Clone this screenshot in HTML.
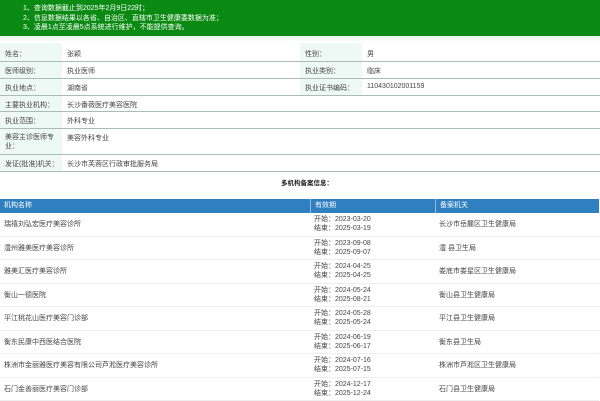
<!DOCTYPE html>
<html><head><meta charset="utf-8"><style>
*{margin:0;padding:0;box-sizing:border-box}
body{width:600px;height:400px;overflow:hidden;background:#fff;font-family:"Liberation Sans","Noto Sans CJK SC",sans-serif;font-size:7px;color:#444}
.hd{position:absolute;left:0;top:0;width:600px;height:36px;background:#0a8a12;color:#fff;font-size:7px;line-height:9.7px;padding:4px 0 0 23px}
.hd::after{content:"";position:absolute;left:0;top:36px;width:600px;height:6px;background:linear-gradient(#e8f4ea,#fff)}
.row{position:absolute;left:0;width:600px;border-bottom:1px solid #a9bdb5}
.c{position:absolute;top:0;bottom:0;padding:6px 0 0 5px}
.lab{background:#eef9f5}
.t{position:absolute;left:0;width:600px;top:177px;text-align:center;font-weight:bold;color:#222;font-size:6.5px;padding-left:14px}
.bh{position:absolute;left:0;top:199px;width:599px;height:14px;background:#2f7fc1;color:#fff}
.bh div,.br div{position:absolute;top:0;bottom:0;padding-left:4px}
.bh div{line-height:14px;border-left:1px solid #8fbbe0}
.br{position:absolute;left:0;width:599px;height:23.5px;border-bottom:1px solid #eee}
.br div{display:flex;align-items:center}
</style></head><body>
<div class="hd">1、查询数据截止到2025年2月9日22时；<br>2、信息数据结果以各省、自治区、直辖市卫生健康委数据为准；<br>3、凌晨1点至凌晨5点系统进行维护，不能提供查询。</div>

<div class="row" style="top:43px;height:19px"><div class="c lab" style="left:0;width:62px">姓名：</div><div class="c" style="left:62px">张颖</div><div class="c lab" style="left:300px;width:62px">性别：</div><div class="c" style="left:362px">男</div></div>
<div class="row" style="top:62px;height:17px"><div class="c lab" style="left:0;width:62px;padding-top:4px">医师级别：</div><div class="c" style="left:62px;padding-top:4px">执业医师</div><div class="c lab" style="left:300px;width:62px;padding-top:4px">执业类别：</div><div class="c" style="left:362px;padding-top:4px">临床</div></div>
<div class="row" style="top:79px;height:17px"><div class="c lab" style="left:0;width:62px;padding-top:4px">执业地点：</div><div class="c" style="left:62px;padding-top:4px">湖南省</div><div class="c lab" style="left:300px;width:62px;padding-top:4px">执业证书编码：</div><div class="c" style="left:362px;padding-top:4px">110430102001159</div></div>
<div class="row" style="top:96px;height:16px"><div class="c lab" style="left:0;width:62px;padding-top:4px">主要执业机构：</div><div class="c" style="left:62px;padding-top:4px">长沙番薇医疗美容医院</div></div>
<div class="row" style="top:112px;height:17px"><div class="c lab" style="left:0;width:62px;padding-top:4px">执业范围：</div><div class="c" style="left:62px;padding-top:4px">外科专业</div></div>
<div class="row" style="top:129px;height:26px"><div class="c lab" style="left:0;width:62px;padding-top:4px;line-height:9px;padding-right:4px">美容主诊医师专业：</div><div class="c" style="left:62px;padding-top:4px">美容外科专业</div></div>
<div class="row" style="top:155px;height:17px"><div class="c lab" style="left:0;width:62px;padding-top:4px">发证(批准)机关：</div><div class="c" style="left:62px;padding-top:4px">长沙市芙蓉区行政审批服务局</div></div>

<div class="t">多机构备案信息：</div>
<div class="bh"><div style="left:0;border:none">机构名称</div><div style="left:310px">有效期</div><div style="left:435px">备案机关</div></div>

<div class="br" style="top:213px"><div style="left:0">瑞禧刘弘宏医疗美容诊所</div><div style="left:310px;line-height:9px">开始：2023-03-20<br>结束：2025-03-19</div><div style="left:435px">长沙市岳麓区卫生健康局</div></div>
<div class="br" style="top:236.5px"><div style="left:0">澧州雅美医疗美容诊所</div><div style="left:310px;line-height:9px">开始：2023-09-08<br>结束：2025-09-07</div><div style="left:435px">澧 县卫生局</div></div>
<div class="br" style="top:260px"><div style="left:0">雅美汇医疗美容诊所</div><div style="left:310px;line-height:9px">开始：2024-04-25<br>结束：2025-04-25</div><div style="left:435px">娄底市娄星区卫生健康局</div></div>
<div class="br" style="top:283.5px"><div style="left:0">衡山一德医院</div><div style="left:310px;line-height:9px">开始：2024-05-24<br>结束：2025-08-21</div><div style="left:435px">衡山县卫生健康局</div></div>
<div class="br" style="top:307px"><div style="left:0">平江桃花山医疗美容门诊部</div><div style="left:310px;line-height:9px">开始：2024-05-28<br>结束：2025-05-24</div><div style="left:435px">平江县卫生健康局</div></div>
<div class="br" style="top:330.5px"><div style="left:0">衡东民康中西医结合医院</div><div style="left:310px;line-height:9px">开始：2024-06-19<br>结束：2025-06-17</div><div style="left:435px">衡东县卫生局</div></div>
<div class="br" style="top:354px"><div style="left:0">株洲市金丽雅医疗美容有限公司芦淞医疗美容诊所</div><div style="left:310px;line-height:9px">开始：2024-07-16<br>结束：2025-07-15</div><div style="left:435px">株洲市芦淞区卫生健康局</div></div>
<div class="br" style="top:377.5px"><div style="left:0">石门金善丽医疗美容门诊部</div><div style="left:310px;line-height:9px">开始：2024-12-17<br>结束：2025-12-24</div><div style="left:435px">石门县卫生健康局</div></div>
</body></html>
